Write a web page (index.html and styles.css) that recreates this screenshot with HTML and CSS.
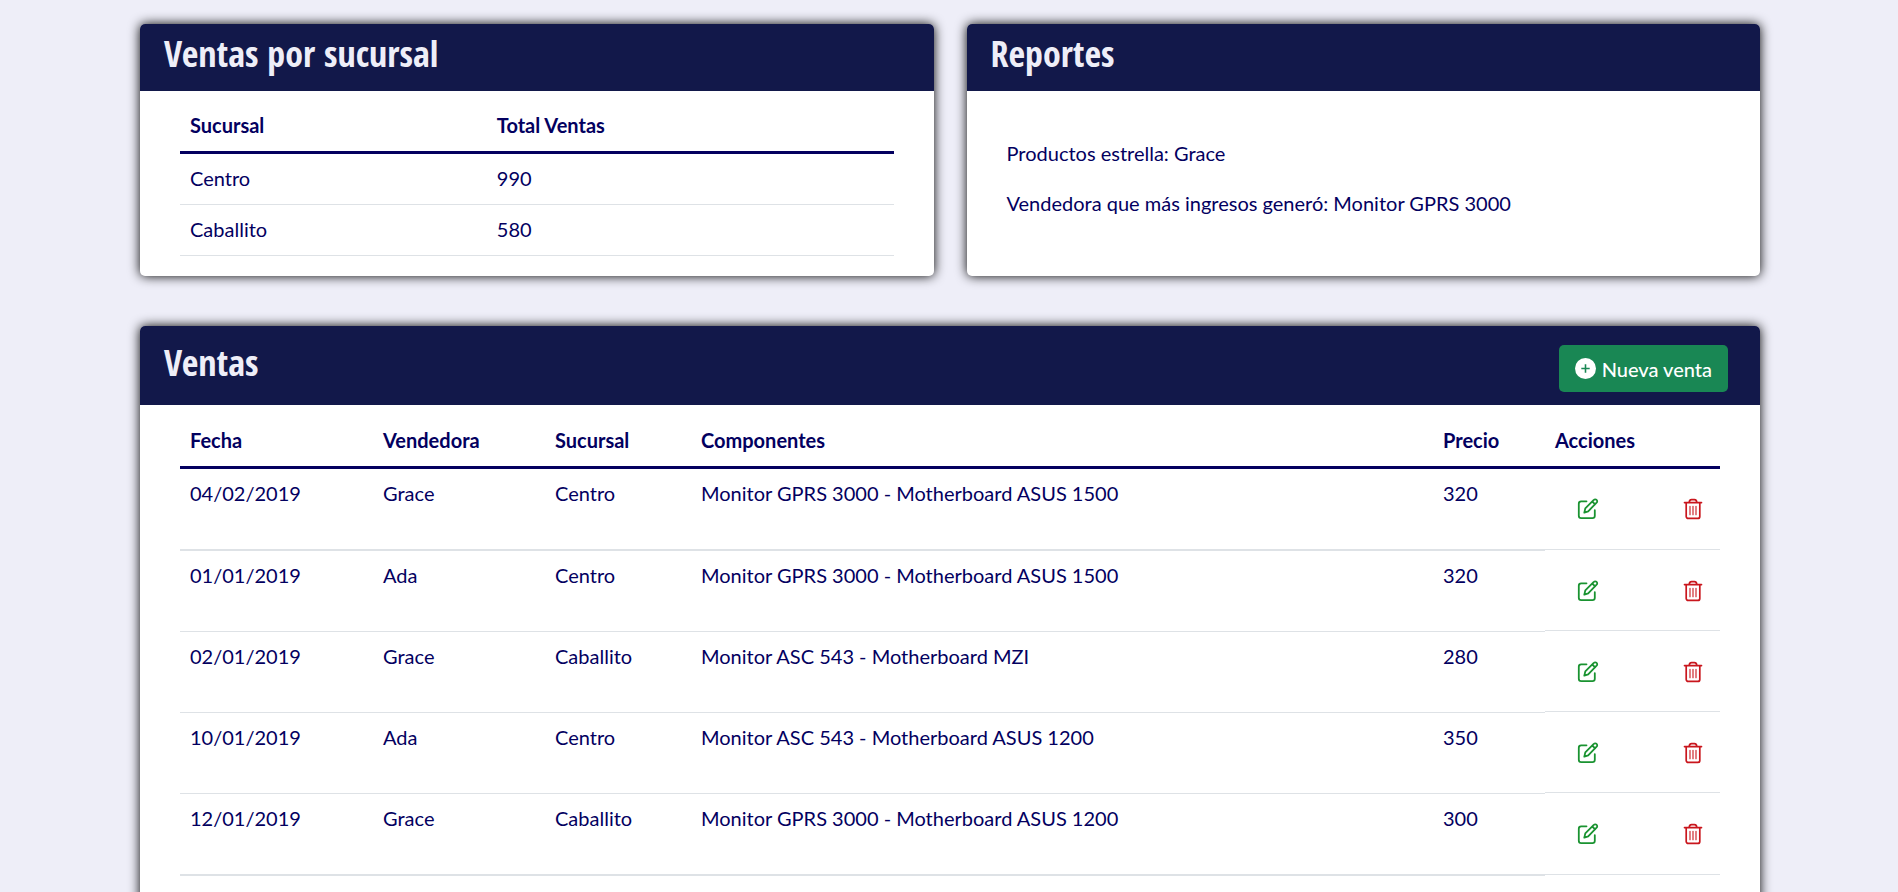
FILE: index.html
```html
<!DOCTYPE html>
<html lang="es">
<head>
<meta charset="utf-8">
<title>Ventas</title>
<link rel="stylesheet" href="styles.css">
</head>
<body>
<svg class="sprite" aria-hidden="true">
  <symbol id="edit" viewBox="0 0 22 22" fill="none" stroke="currentColor" stroke-width="1.8" stroke-linecap="round" stroke-linejoin="round">
    <path d="M9.500 3.300H4.200a2.400 2.400 0 0 0-2.400 2.400v12.100a2.400 2.400 0 0 0 2.400 2.400h11.200a2.400 2.400 0 0 0 2.400-2.400v-5.600"/>
    <path d="M7.300 14.600l1-4.200 8.500-8.500a1.900 1.900 0 0 1 2.800 0 1.900 1.900 0 0 1 0 2.800l-8.400 8.600zM15.300 3.500l2.800 2.800"/>
  </symbol>
  <symbol id="trash" viewBox="0 0 20 22" fill="none" stroke="currentColor" stroke-linecap="round" stroke-linejoin="round">
    <path stroke-width="1.7" d="M1.500 4.600h17M3.200 4.800v13.600a2 2 0 0 0 2 2h9.600a2 2 0 0 0 2-2V4.800M6.200 4.200c.3-1.900 1.200-2.600 2.300-2.600h3c1.100 0 2 .7 2.300 2.600"/>
    <path stroke-width="1.1" d="M7 8.300v8.400M10 8.300v8.400M13 8.300v8.400"/>
  </symbol>
</svg>
<main class="page">
  <section class="card">
    <header class="card-head"><h2>Ventas por sucursal</h2></header>
    <div class="card-body">
      <table class="table">
        <colgroup><col class="c-branch"><col></colgroup>
        <thead><tr><th>Sucursal</th><th>Total Ventas</th></tr></thead>
        <tbody>
          <tr><td>Centro</td><td>990</td></tr>
          <tr><td>Caballito</td><td>580</td></tr>
        </tbody>
      </table>
    </div>
  </section>

  <section class="card">
    <header class="card-head"><h2>Reportes</h2></header>
    <div class="card-body reports">
      <p>Productos estrella: Grace</p>
      <p>Vendedora que más ingresos generó: Monitor GPRS 3000</p>
    </div>
  </section>

  <section class="card card-wide">
    <header class="card-head card-head-tall">
      <h2>Ventas</h2>
      <button class="btn-new" type="button">
        <svg viewBox="0 0 20 20" aria-hidden="true"><circle cx="10" cy="10" r="10" fill="#fff"/><path d="M10 6v8M6 10h8" stroke="#198754" stroke-width="1.5"/></svg>
        Nueva venta
      </button>
    </header>
    <div class="card-body card-body-sales">
      <table class="table sales">
        <colgroup><col class="c-date"><col class="c-seller"><col class="c-place"><col class="c-parts"><col class="c-price"><col></colgroup>
        <thead><tr><th>Fecha</th><th>Vendedora</th><th>Sucursal</th><th>Componentes</th><th>Precio</th><th>Acciones</th></tr></thead>
        <tbody>
          <tr class="strong"><td>04/02/2019</td><td>Grace</td><td>Centro</td><td>Monitor GPRS 3000 - Motherboard ASUS 1500</td><td>320</td><td class="actions"><div><button class="edit" type="button" aria-label="Editar"><svg><use href="#edit"/></svg></button><button class="trash" type="button" aria-label="Eliminar"><svg><use href="#trash"/></svg></button></div></td></tr>
          <tr><td>01/01/2019</td><td>Ada</td><td>Centro</td><td>Monitor GPRS 3000 - Motherboard ASUS 1500</td><td>320</td><td class="actions"><div><button class="edit" type="button" aria-label="Editar"><svg><use href="#edit"/></svg></button><button class="trash" type="button" aria-label="Eliminar"><svg><use href="#trash"/></svg></button></div></td></tr>
          <tr><td>02/01/2019</td><td>Grace</td><td>Caballito</td><td>Monitor ASC 543 - Motherboard MZI</td><td>280</td><td class="actions"><div><button class="edit" type="button" aria-label="Editar"><svg><use href="#edit"/></svg></button><button class="trash" type="button" aria-label="Eliminar"><svg><use href="#trash"/></svg></button></div></td></tr>
          <tr><td>10/01/2019</td><td>Ada</td><td>Centro</td><td>Monitor ASC 543 - Motherboard ASUS 1200</td><td>350</td><td class="actions"><div><button class="edit" type="button" aria-label="Editar"><svg><use href="#edit"/></svg></button><button class="trash" type="button" aria-label="Eliminar"><svg><use href="#trash"/></svg></button></div></td></tr>
          <tr class="strong"><td>12/01/2019</td><td>Grace</td><td>Caballito</td><td>Monitor GPRS 3000 - Motherboard ASUS 1200</td><td>300</td><td class="actions"><div><button class="edit" type="button" aria-label="Editar"><svg><use href="#edit"/></svg></button><button class="trash" type="button" aria-label="Eliminar"><svg><use href="#trash"/></svg></button></div></td></tr>
        </tbody>
      </table>
    </div>
  </section>
</main>
</body>
</html>
```
FILE: styles.css
```css
* { box-sizing: border-box; }
body {
  margin: 0;
  background: #eeeef8;
  color: #03005f;
  font: 20px/30px Lato, "Noto Sans", sans-serif;
}
.sprite { display: none; }
.page {
  display: grid;
  grid-template-columns: 1fr 1fr;
  gap: 50px 33px;
  padding: 24px 138px 24px 140px;
}
.card {
  background: #fff;
  border-radius: 5px;
  box-shadow: 0 0 12px #000;
  overflow: hidden;
}
.card-wide { grid-column: 1 / -1; }
.card-head {
  background: #12184a;
  color: #eeeef8;
  padding: 12px 24px 19px;
}
.card-head h2 {
  margin: 0;
  font-family: "Open Sans Condensed", Lato, sans-serif;
  font-size: 36px;
  line-height: 36px;
  font-weight: 700;
}
.card-head-tall {
  display: flex;
  justify-content: space-between;
  align-items: flex-start;
  padding: 19px 32px 13px 24px;
}
.card-body { padding: 10px 40px 20px; }
.card-body-sales { padding-top: 11px; padding-bottom: 40px; }
.reports { padding-top: 47px; }
.reports p { margin: 0 0 20px; }

.btn-new {
  display: flex;
  align-items: center;
  gap: 6px;
  height: 47px;
  padding: 0 16px;
  border: 0;
  border-radius: 5px;
  background: #198754;
  color: #fff;
  font: 500 20px/30px Lato, "Noto Sans", sans-serif;
}
.btn-new svg { width: 21px; height: 21px; }

.table {
  width: 100%;
  table-layout: fixed;
  border-collapse: separate;
  border-spacing: 0;
}
.table th, .table td {
  padding: 9px 10px 11px;
  text-align: left;
  vertical-align: top;
}
.table th {
  font-weight: 700;
  border-bottom: 3px solid #03005f;
}
.table td { border-bottom: 1px solid #dee2e6; }
.c-branch { width: 43%; }

.c-date { width: 193px; }
.c-seller { width: 172px; }
.c-place { width: 146px; }
.c-parts { width: auto; }
.c-price { width: 112px; }
.sales col:last-child { width: 175px; }
.sales td { height: 81px; }
.sales .strong td {
  height: 82px;
  border-bottom-width: 2px;
}
.sales td.actions {
  border-bottom: 1px solid transparent;
  box-shadow: inset 0 -1px #dee2e6;
  padding: 29px 16px 0 32px;
}
.actions div {
  display: flex;
  justify-content: space-between;
}
.actions button {
  display: block;
  padding: 0;
  border: 0;
  background: none;
}
.actions svg {
  display: block;
  width: 22px;
  height: 22px;
}
.edit { color: #1a9331; }
.trash { color: #c9161d; }
```
